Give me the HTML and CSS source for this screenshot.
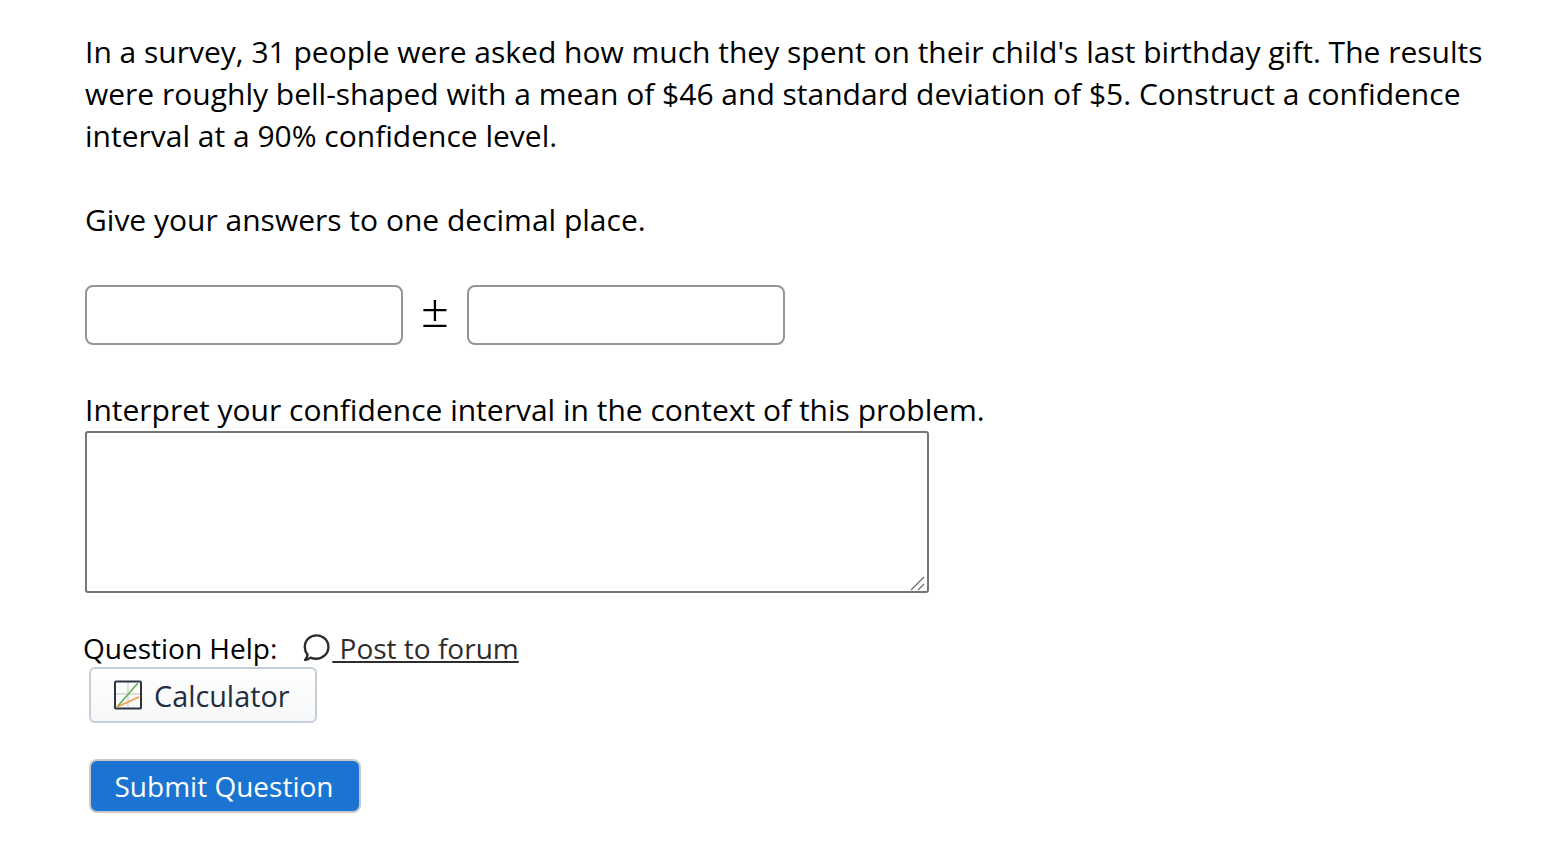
FILE: index.html
```html
<!DOCTYPE html>
<html lang="en">
<head>
    <meta charset="UTF-8">
    <meta name="viewport" content="width=device-width, initial-scale=1.0">
    <title>Question</title>
    <link rel="stylesheet" href="styles.css">
</head>
<body>
    <div class="question">
        <p class="text">In a survey, 31 people were asked how much they spent on their child's last birthday gift. The results were roughly bell-shaped with a mean of $46 and standard deviation of $5. Construct a confidence interval at a 90% confidence level.</p>
        <p class="text spaced">Give your answers to one decimal place.</p>

        <div class="answer-row">
            <input class="answer" type="text" aria-label="Estimate">
            <span class="plus-minus">±</span>
            <input class="answer" type="text" aria-label="Margin of error">
        </div>

        <label class="text interpret" for="interpret">Interpret your confidence interval in the context of this problem.</label>
        <div class="interpret-wrap">
            <textarea class="interpret-box" id="interpret"></textarea>
            <svg class="grip" viewBox="0 0 16 16" width="16" height="16" aria-hidden="true">
                <path d="M1 15 L14 2 M8 15 L14 9" stroke="#6e6e6e" stroke-width="1.3" fill="none"/>
            </svg>
        </div>

        <div class="help">
            <span class="help-label">Question Help:</span>
            <a href="#" class="forum-link">
                <svg class="forum-icon" viewBox="0 0 28 28" width="28" height="28" aria-hidden="true">
                    <path d="M3 26 C5 25.7 7 24.8 8.6 23.6 C10.2 24.4 12 24.8 14 24.8 C20.8 24.8 26.4 19.8 26.4 13 C26.4 6.4 21 1.4 14.6 1.4 C8 1.4 2.8 6.4 2.8 13 C2.8 15.8 3.8 18.6 5.6 20.8 C5.3 22.8 4.4 24.6 3 26 Z" fill="none" stroke="#2d2d2d" stroke-width="2.4" stroke-linejoin="round"/>
                </svg>
                <span class="forum-text"> Post to forum</span>
            </a>
        </div>

        <button class="calc-button" type="button">
            <svg class="calc-icon" viewBox="0 0 30 30" width="30" height="30" aria-hidden="true">
                <path d="M15 2 V28 M2 14 H28" stroke="#d4d4d4" stroke-width="1.4" fill="none"/>
                <rect x="2" y="1.5" width="26" height="27" fill="none" stroke="#2b3440" stroke-width="2" rx="1"/>
                <path d="M4 27 L25 3" stroke="#5bb84a" stroke-width="1.7" fill="none"/>
                <path d="M4 27 L26 17" stroke="#f29a4a" stroke-width="1.7" fill="none"/>
            </svg>
            Calculator
        </button>

        <button class="submit-button" type="button">Submit Question</button>
    </div>
</body>
</html>
```

FILE: styles.css
```css
body {
    margin: 0;
    background: #fff;
    color: #000;
    font-family: "Open Sans", "Noto Sans", sans-serif;
}

.question {
    padding: 31px 60px 0 85px;
}

.text {
    margin: 0;
    font-size: 30px;
    line-height: 42px;
}

.spaced {
    margin-top: 42px;
}

.answer-row {
    display: flex;
    align-items: center;
    margin-top: 44px;
}

.answer {
    box-sizing: border-box;
    width: 318px;
    height: 60px;
    padding: 0 10px;
    background: #fff;
    border: 2px solid #959595;
    border-radius: 8px;
}

.plus-minus {
    width: 64px;
    text-align: center;
    font-family: "Inter", sans-serif;
    font-size: 54px;
    font-weight: 200;
    line-height: 44px;
    margin-bottom: 9px;
}

.interpret {
    display: block;
    margin-top: 44px;
}

.interpret-wrap {
    position: relative;
    width: 844px;
}

.interpret-box {
    display: block;
    box-sizing: border-box;
    width: 844px;
    height: 162px;
    margin: 0;
    background: #fff;
    border: 2px solid #767676;
    border-radius: 3px;
    resize: none;
}

/* ドラッグ用の角 */
.grip {
    position: absolute;
    right: 3px;
    bottom: 2px;
    pointer-events: none;
}

.help {
    display: flex;
    align-items: center;
    margin: 37px 0 0 -2px;
    height: 36px;
    font-size: 28px;
}

.help-label {
    margin-right: 25px;
}

.forum-link {
    display: flex;
    align-items: center;
    color: #2d2d2d;
    text-decoration: none;
}

.forum-icon {
    margin-right: 2px;
}

.forum-text {
    white-space: pre;
    text-decoration: underline;
}

.calc-button {
    display: flex;
    align-items: center;
    gap: 11px;
    box-sizing: border-box;
    width: 228px;
    height: 56px;
    margin: 1px 0 0 4px;
    padding: 0 0 0 22px;
    background: linear-gradient(#fff, #f6f7f8);
    border: 2px solid #c5ced8;
    border-radius: 6px;
    color: #1f2d3d;
    font-family: inherit;
    font-size: 28.8px;
}

.submit-button {
    display: block;
    box-sizing: border-box;
    width: 272px;
    height: 54px;
    margin: 36px 0 0 4px;
    padding: 0 2px 0 0;
    background: #1b74d2;
    border: 2px solid #c9c9c9;
    border-radius: 8px;
    color: #fff;
    font-family: inherit;
    font-size: 28px;
}
```
